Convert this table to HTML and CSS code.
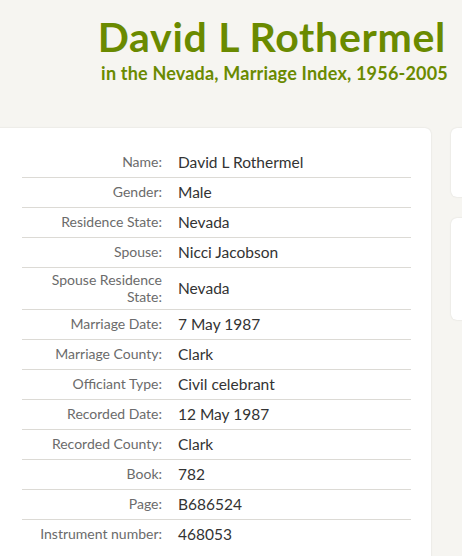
FILE: index.html
```html
<!DOCTYPE html>
<html>
<head>
<meta charset="utf-8">
<link rel="stylesheet" href="styles.css">
</head>
<body>
<header class="page-head">
  <h1 class="title">David L Rothermel</h1>
  <p class="subtitle">in the Nevada, Marriage Index, 1956-2005</p>
</header>
<main class="layout">
  <section class="record-card">
    <div class="record">
      <div class="row"><div class="label">Name:</div><div class="value">David L Rothermel</div></div>
      <div class="row"><div class="label">Gender:</div><div class="value">Male</div></div>
      <div class="row"><div class="label">Residence State:</div><div class="value">Nevada</div></div>
      <div class="row"><div class="label">Spouse:</div><div class="value">Nicci Jacobson</div></div>
      <div class="row"><div class="label">Spouse Residence State:</div><div class="value">Nevada</div></div>
      <div class="row"><div class="label">Marriage Date:</div><div class="value">7 May 1987</div></div>
      <div class="row"><div class="label">Marriage County:</div><div class="value">Clark</div></div>
      <div class="row"><div class="label">Officiant Type:</div><div class="value">Civil celebrant</div></div>
      <div class="row"><div class="label">Recorded Date:</div><div class="value">12 May 1987</div></div>
      <div class="row"><div class="label">Recorded County:</div><div class="value">Clark</div></div>
      <div class="row"><div class="label">Book:</div><div class="value">782</div></div>
      <div class="row"><div class="label">Page:</div><div class="value">B686524</div></div>
      <div class="row last"><div class="label">Instrument number:</div><div class="value">468053</div></div>
    </div>
  </section>
  <aside class="side">
    <div class="side-card first"></div>
    <div class="side-card second"></div>
  </aside>
</main>
</body>
</html>
```
FILE: styles.css
```css
html, body {
  margin: 0;
  padding: 0;
}
body {
  background: #f6f5f1;
  font-family: Lato, "Open Sans", sans-serif;
  width: 462px;
  height: 556px;
  overflow: hidden;
}
.page-head {
  text-align: right;
  padding: 14px 14px 0 0;
  height: 114px;
  box-sizing: border-box;
}
.title {
  margin: 0;
  font-size: 41px;
  line-height: 46px;
  font-weight: 700;
  color: #6a8a00;
  letter-spacing: 0.7px;
  margin-right: 2px;
}
.subtitle {
  margin: 2px 0 0;
  font-size: 18px;
  line-height: 22px;
  font-weight: 700;
  color: #6a8a00;
  letter-spacing: 0.2px;
}
.layout {
  display: flex;
  gap: 20px;
  margin-top: 14px;
  align-items: flex-start;
}
.record-card {
  flex: 0 0 auto;
  width: 439px;
  margin-left: -8px;
  box-sizing: border-box;
  background: #fff;
  border-radius: 6px;
  box-shadow: 0 0 2px rgba(0,0,0,0.12);
  padding: 20px 20px 20px 30px;
  min-height: 460px;
}
.row {
  display: grid;
  grid-template-columns: 140px 1fr;
  column-gap: 16px;
  align-items: center;
  padding: 4px 0;
  border-bottom: 1px solid #dcdad5;
}
.row.last {
  border-bottom: none;
}
.label {
  text-align: right;
  font-size: 14px;
  line-height: 16.5px;
  color: #6b6b6b;
  padding-left: 10px;
}
.value {
  font-size: 15.5px;
  line-height: 21px;
  color: #333;
}
.side {
  flex: 0 0 auto;
  display: flex;
  flex-direction: column;
  gap: 21px;
  width: 60px;
}
.side-card {
  background: #fff;
  border-radius: 6px;
  box-shadow: 0 0 2px rgba(0,0,0,0.12);
}
.side-card.first { height: 69px; }
.side-card.second { height: 102px; }
```
